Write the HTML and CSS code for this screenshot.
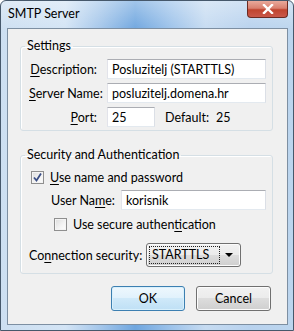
FILE: index.html
```html
<!DOCTYPE html>
<html lang="en">
<head>
  <meta charset="UTF-8" />
  <title>SMTP Server</title>
  <link rel="stylesheet" href="styles.css">
</head>
<body>
  <div class="window">
    <div class="titlebar">
      <span class="title">SMTP Server</span>
      <span class="close">
        <svg width="12" height="10" viewBox="0 0 12 10">
          <path d="M2 1 L10 9 M10 1 L2 9" stroke="#fff" stroke-width="2.4" stroke-linecap="square" fill="none"/>
        </svg>
      </span>
    </div>

    <div class="client">
      <fieldset class="group settings">
        <legend>Settings</legend>
        <div class="form-grid">
          <label><u>D</u>escription:</label>
          <input class="textbox" type="text" value="Posluzitelj (STARTTLS)">

          <label><u>S</u>erver Name:</label>
          <input class="textbox" type="text" value="posluzitelj.domena.hr">

          <label><u>P</u>ort:</label>
          <div class="port-row">
            <input class="textbox port" type="text" value="25">
            <span class="default-label">Default:</span>
            <span>25</span>
          </div>
        </div>
      </fieldset>

      <fieldset class="group security">
        <legend>Security and Authentication</legend>

        <div class="check-row">
          <span class="checkbox">
            <svg width="11" height="11" viewBox="0 0 11 11">
              <path d="M2 5.5 L4.5 8.5 L9 1.5" stroke="#3b4f86" stroke-width="1.8" fill="none"/>
            </svg>
          </span>
          <span><u>U</u>se name and password</span>
        </div>

        <div class="user-row">
          <label>User Na<u>m</u>e:</label>
          <input class="textbox" type="text" value="korisnik">
        </div>

        <div class="check-row sub">
          <span class="checkbox"></span>
          <span>Use secure authen<u>t</u>ication</span>
        </div>

        <div class="conn-row">
          <label>Co<u>n</u>nection security:</label>
          <div class="dropdown">
            <span class="focus">STARTTLS</span>
            <span class="arrow"></span>
          </div>
        </div>
      </fieldset>

      <div class="buttons">
        <button class="btn default">OK</button>
        <button class="btn cancel">Cancel</button>
      </div>
    </div>
  </div>
</body>
</html>
```

FILE: styles.css
```css
body {
  margin: 0;
  font-family: 'Lato', sans-serif;
  font-size: 12.5px;
  color: #000;
}

u {
  text-decoration-thickness: 1px;
  text-underline-offset: 2px;
}

.window {
  width: 294px;
  height: 331px;
  box-sizing: border-box;
  border: 1px solid #46586b;
  border-radius: 6px 6px 0 0;
  display: flex;
  flex-direction: column;
  background:
    linear-gradient(180deg, rgba(255, 255, 255, 0.35) 0%, rgba(255, 255, 255, 0) 30px),
    linear-gradient(90deg, #cddff1 0%, #d3e4f5 22%, #a4c6ea 34%, #6fa6df 46%, #9cc2ea 58%, #c6dbf1 70%, #b8d2ee 85%, #bcd5ee 100%);
}

.titlebar {
  height: 27px;
  display: flex;
  align-items: center;
  padding-left: 7px;
  flex-shrink: 0;
}

.title {
  line-height: 16px;
  padding-bottom: 1px;
}

.close {
  margin-left: auto;
  margin-right: 5px;
  align-self: flex-start;
  width: 41px;
  height: 17px;
  box-sizing: border-box;
  border: 1px solid #6b2a22;
  border-top: none;
  border-radius: 0 0 4px 4px;
  display: flex;
  align-items: center;
  justify-content: center;
  background: linear-gradient(180deg, #e9a99b 0%, #d9806f 45%, #c0442f 55%, #c9584a 100%);
}

.client {
  flex: 1;
  margin: 0 5px 5px 6px;
  border: 1px solid #7d8fa2;
  background-color: #f0f0f0;
  padding: 9px 14px 0 12px;
}

.group {
  margin: 0;
  min-width: 0;
  border: 1px solid #d5dfe5;
  border-radius: 3px;
  box-shadow: inset 1px 1px 0 #fff;
}

.group legend {
  padding: 0 2px;
  margin-left: -4px;
  line-height: 16px;
}

.settings {
  padding: 5px 6px 3px 8px;
}

.security {
  margin-top: 16px;
  padding: 5px 6px 6px 8px;
}

.form-grid {
  display: grid;
  grid-template-columns: 68px 1fr;
  column-gap: 10px;
  row-gap: 4px;
}

.form-grid label {
  text-align: right;
  align-self: center;
  white-space: nowrap;
}

.textbox {
  height: 20px;
  box-sizing: border-box;
  width: 100%;
  margin: 0;
  padding: 0 4px;
  border: 1px solid;
  border-color: #abadb3 #dbdfe6 #e3e9ef #e2e3ea;
  background: #fff;
  font-family: inherit;
  font-size: inherit;
  color: #000;
}

.port-row {
  display: flex;
  align-items: center;
}

.textbox.port {
  width: 48px;
}

.default-label {
  margin-left: 10px;
  width: 51px;
}

.check-row {
  height: 19px;
  display: flex;
  align-items: center;
  gap: 6px;
  margin-left: 2px;
}

.check-row.sub {
  margin-top: 5px;
  margin-left: 25px;
}

.checkbox {
  width: 13px;
  height: 13px;
  box-sizing: border-box;
  border: 1px solid #8f8f8f;
  background: linear-gradient(135deg, #dcdcdc 0%, #f4f4f4 60%, #fdfdfd 100%);
  box-shadow: inset 0 0 0 1px #f4f4f4;
  display: flex;
  align-items: center;
  justify-content: center;
}

.user-row {
  margin-top: 3px;
  height: 20px;
  display: flex;
  align-items: center;
}

.user-row label {
  margin-left: 22px;
  width: 70px;
  flex-shrink: 0;
  white-space: nowrap;
}

.conn-row {
  margin-top: 9px;
  height: 24px;
  display: flex;
  align-items: center;
}

.conn-row label {
  width: 117px;
  flex-shrink: 0;
  white-space: nowrap;
}

.dropdown {
  width: 95px;
  height: 24px;
  box-sizing: border-box;
  border: 1px solid #707070;
  border-radius: 3px;
  background: linear-gradient(180deg, #f2f2f2 0%, #ebebeb 50%, #dddddd 50%, #cfcfcf 100%);
  box-shadow: inset 0 0 0 1px #fbfbfb;
  display: flex;
  align-items: center;
  padding: 0 7px 0 2px;
}

.dropdown .focus {
  width: 71px;
  height: 18px;
  box-sizing: border-box;
  border: 1px dotted #222;
  line-height: 16px;
  padding-left: 2px;
}

.dropdown .arrow {
  margin-left: auto;
  width: 0;
  height: 0;
  border-left: 4px solid transparent;
  border-right: 4px solid transparent;
  border-top: 4px solid #000;
}

.buttons {
  margin-top: 12px;
  margin-right: 2px;
  display: flex;
  justify-content: flex-end;
  gap: 11px;
}

.btn {
  height: 25px;
  box-sizing: border-box;
  border: 1px solid #707070;
  border-radius: 3px;
  background: linear-gradient(180deg, #f2f2f2 0%, #ebebeb 50%, #dddddd 50%, #cfcfcf 100%);
  box-shadow: inset 0 0 0 1px #fcfcfc;
  font-family: inherit;
  font-size: inherit;
  color: #000;
  padding: 0;
}

.btn.default {
  width: 74px;
  border-color: #3c7fb1;
  background: linear-gradient(180deg, #eef7fd 0%, #e0f1fc 50%, #cfe9f9 50%, #bfe0f5 100%);
  box-shadow: inset 0 0 0 1px #d8f0fc;
}

.btn.cancel {
  width: 75px;
}
```
